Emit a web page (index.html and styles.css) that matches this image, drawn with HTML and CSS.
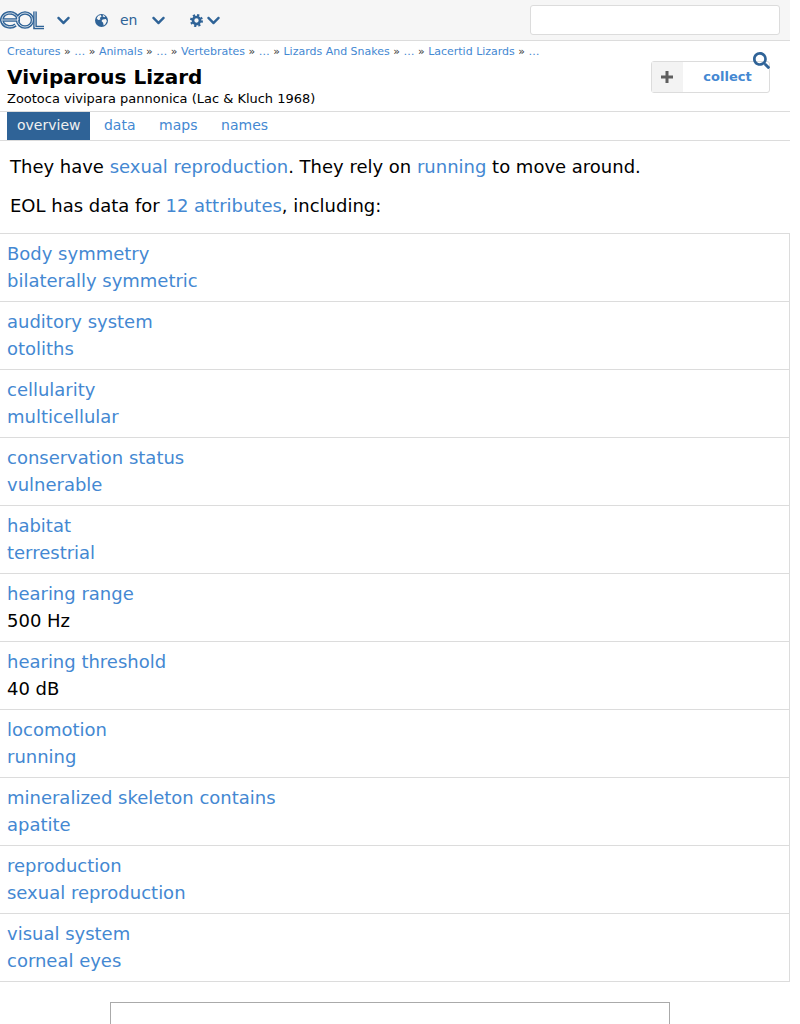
FILE: index.html
```html
<!DOCTYPE html>
<html lang="en">
<head>
  <meta charset="UTF-8" />
  <meta name="viewport" content="width=device-width, initial-scale=1" />
  <title>Viviparous Lizard</title>
  <link rel="stylesheet" href="styles.css">
</head>
<body>
  <div class="page">
    <!-- Top bar -->
    <div class="topbar">
      <svg class="logo" viewBox="0 0 44 20" width="44" height="20" aria-label="EOL">
        <g class="logo-thick">
          <path d="M1.8 10h16.4a8.2 7 0 1 0-2.6 5"/>
          <ellipse cx="25" cy="10" rx="7.5" ry="7"/>
          <path d="M35 1.5v16h9"/>
        </g>
        <g class="logo-thin">
          <path d="M1.8 10h16.4a8.2 7 0 1 0-2.6 5"/>
          <ellipse cx="25" cy="10" rx="7.5" ry="7"/>
          <path d="M35 1.5v16h9"/>
        </g>
      </svg>
      <svg class="icon chevron chevron-logo" viewBox="0 0 448 512"><path d="M207.029 381.476L12.686 187.132c-9.373-9.373-9.373-24.569 0-33.941l22.667-22.667c9.357-9.357 24.522-9.375 33.901-.04L224 284.505l154.745-154.021c9.379-9.335 24.544-9.317 33.901.04l22.667 22.667c9.373 9.373 9.373 24.569 0 33.941L240.971 381.476c-9.373 9.372-24.569 9.372-33.942 0z"/></svg>
      <svg class="icon globe" viewBox="0 0 24 24">
        <circle cx="12" cy="12" r="12"/>
        <path class="land" d="M6 3l5-1 1 3-3 2 1 3-4 1-3-3zM14 10l6-1 2 4-3 6-3 2-1-5-3-3zM15 2l4 2-2 2-3-2z"/>
      </svg>
      <span class="lang">en</span>
      <svg class="icon chevron chevron-lang" viewBox="0 0 448 512"><path d="M207.029 381.476L12.686 187.132c-9.373-9.373-9.373-24.569 0-33.941l22.667-22.667c9.357-9.357 24.522-9.375 33.901-.04L224 284.505l154.745-154.021c9.379-9.335 24.544-9.317 33.901.04l22.667 22.667c9.373 9.373 9.373 24.569 0 33.941L240.971 381.476c-9.373 9.372-24.569 9.372-33.942 0z"/></svg>
      <svg class="icon cog" viewBox="0 0 24 24">
        <circle class="cog-teeth" cx="12" cy="12" r="10"/>
        <circle class="cog-ring" cx="12" cy="12" r="6.5"/>
      </svg>
      <svg class="icon chevron chevron-cog" viewBox="0 0 448 512"><path d="M207.029 381.476L12.686 187.132c-9.373-9.373-9.373-24.569 0-33.941l22.667-22.667c9.357-9.357 24.522-9.375 33.901-.04L224 284.505l154.745-154.021c9.379-9.335 24.544-9.317 33.901.04l22.667 22.667c9.373 9.373 9.373 24.569 0 33.941L240.971 381.476c-9.373 9.372-24.569 9.372-33.942 0z"/></svg>
      <input class="search-input" type="text" />
    </div>

    <!-- Page header -->
    <div class="header">
      <div class="crumbs">
        <a href="#">Creatures</a> » <a href="#">…</a> » <a href="#">Animals</a> » <a href="#">…</a> » <a href="#">Vertebrates</a> » <a href="#">…</a> » <a href="#">Lizards And Snakes</a> » <a href="#">…</a> » <a href="#">Lacertid Lizards</a> » <a href="#">…</a>
      </div>
      <div class="title-row">
        <div>
          <h1 class="title">Viviparous Lizard</h1>
          <div class="subtitle">Zootoca vivipara pannonica (Lac &amp; Kluch 1968)</div>
        </div>
        <button class="collect-btn">
          <span class="collect-plus"><svg viewBox="0 0 12 12" width="12" height="12"><path d="M4.5 0h3v4.5H12v3H7.5V12h-3V7.5H0v-3h4.5z"/></svg></span>
          <span class="collect-label">collect</span>
        </button>
      </div>
      <svg class="search-icon" viewBox="0 0 512 512"><path d="M505 442.7L405.3 343c-4.5-4.5-10.6-7-17-7H372c27.6-35.3 44-79.7 44-128C416 93.1 322.9 0 208 0S0 93.1 0 208s93.1 208 208 208c48.3 0 92.7-16.4 128-44v16.3c0 6.4 2.5 12.5 7 17l99.7 99.7c9.4 9.4 24.6 9.4 33.9 0l28.3-28.3c9.4-9.4 9.4-24.6.1-34zM208 336c-70.7 0-128-57.2-128-128 0-70.7 57.2-128 128-128 70.7 0 128 57.2 128 128 0 70.7-57.2 128-128 128z"/></svg>
    </div>

    <!-- Tabs -->
    <div class="tabs">
      <a class="tab active" href="#">overview</a>
      <a class="tab" href="#">data</a>
      <a class="tab" href="#">maps</a>
      <a class="tab" href="#">names</a>
    </div>

    <!-- Summary -->
    <div class="summary">
      <p>They have <a href="#">sexual reproduction</a>. They rely on <a href="#">running</a> to move around.</p>
      <p>EOL has data for <a href="#">12 attributes</a>, including:</p>
    </div>

    <!-- Attributes -->
    <ul class="attrs">
      <li><a href="#">Body symmetry</a><a href="#">bilaterally symmetric</a></li>
      <li><a href="#">auditory system</a><a href="#">otoliths</a></li>
      <li><a href="#">cellularity</a><a href="#">multicellular</a></li>
      <li><a href="#">conservation status</a><a href="#">vulnerable</a></li>
      <li><a href="#">habitat</a><a href="#">terrestrial</a></li>
      <li><a href="#">hearing range</a><span>500 Hz</span></li>
      <li><a href="#">hearing threshold</a><span>40 dB</span></li>
      <li><a href="#">locomotion</a><a href="#">running</a></li>
      <li><a href="#">mineralized skeleton contains</a><a href="#">apatite</a></li>
      <li><a href="#">reproduction</a><a href="#">sexual reproduction</a></li>
      <li><a href="#">visual system</a><a href="#">corneal eyes</a></li>
    </ul>

    <div class="map-box"></div>
  </div>
</body>
</html>
```

FILE: styles.css
```css
html, body {
  margin: 0;
  padding: 0;
  background: #fff;
}

body {
  font-family: "DejaVu Sans", sans-serif;
  color: #000;
}

a {
  color: #4488d2;
  text-decoration: none;
}

.page {
  width: 790px;
  height: 1024px;
  overflow: hidden;
  position: relative;
}

/* top bar */
.topbar {
  display: flex;
  align-items: center;
  box-sizing: border-box;
  height: 41px;
  background: #f6f6f6;
  border-bottom: 1px solid #dcdcdc;
}

.logo {
  display: block;
  flex: none;
}

.logo g {
  fill: none;
}

.logo-thick {
  stroke: #2f6397;
  stroke-width: 3.6;
}

.logo-thin {
  stroke: #f6f6f6;
  stroke-width: 0.8;
}

.icon {
  display: block;
  flex: none;
  fill: #2f6397;
}

.chevron {
  width: 13px;
  height: 15px;
}

.chevron-logo {
  margin-left: 13px;
}

.globe {
  width: 13px;
  height: 13px;
  margin-left: 25px;
}

.globe .land {
  fill: #f6f6f6;
}

.lang {
  margin-left: 12px;
  font-size: 14px;
  color: #2f6397;
}

.chevron-lang {
  margin-left: 14px;
}

.cog {
  width: 13px;
  height: 13px;
  margin-left: 25px;
  fill: none;
}

.cog-teeth {
  stroke: #2f6397;
  stroke-width: 4;
  stroke-dasharray: 4 3.85;
}

.cog-ring {
  stroke: #2f6397;
  stroke-width: 5;
}

.chevron-cog {
  margin-left: 4px;
}

.search-input {
  box-sizing: border-box;
  width: 250px;
  height: 30px;
  margin-left: auto;
  margin-right: 10px;
  border: 1px solid #dcdcdc;
  border-radius: 3px;
  background: #fff;
}

/* header */
.header {
  position: relative;
  box-sizing: border-box;
  height: 71px;
  padding: 4px 20px 0 7px;
  border-bottom: 1px solid #dcdcdc;
}

.crumbs {
  font-size: 10.99px;
  line-height: 14px;
  color: #333;
}

.title-row {
  display: flex;
  justify-content: space-between;
}

.title {
  margin: 6px 0 0;
  font-size: 20px;
  line-height: 24px;
  font-weight: 700;
}

.subtitle {
  font-size: 12.98px;
  line-height: 19px;
}

.collect-btn {
  display: flex;
  align-items: stretch;
  box-sizing: border-box;
  width: 119px;
  height: 32px;
  margin-top: 2px;
  padding: 0;
  border: 1px solid #dcdcdc;
  border-radius: 3px;
  background: #fff;
  font-family: inherit;
}

.collect-plus {
  display: flex;
  align-items: center;
  justify-content: center;
  width: 31px;
  padding-right: 2px;
  box-sizing: border-box;
  background: #f3f3f3;
}

.collect-plus svg {
  fill: #5f5f5f;
}

.collect-label {
  flex: 1;
  padding-left: 3px;
  font-size: 13px;
  line-height: 29px;
  font-weight: 700;
  color: #4488d2;
}

.search-icon {
  position: absolute;
  left: 753px;
  top: 11px;
  width: 17px;
  height: 17px;
  fill: #2f6397;
}

/* tabs */
.tabs {
  display: flex;
  box-sizing: border-box;
  height: 29px;
  padding-left: 7px;
  border-bottom: 1px solid #dcdcdc;
}

.tab {
  padding: 0 13.6px 0 10px;
  font-size: 14px;
  line-height: 26px;
}

.tab.active {
  padding: 0 10px;
  margin-right: 3.5px;
  background: #2f6397;
  color: #f0f0f0;
}

/* summary */
.summary {
  box-sizing: border-box;
  height: 92px;
  padding: 12px 10px 0;
  font-size: 17.99px;
  line-height: 27px;
}

.summary p {
  margin: 0 0 12px;
}

/* attributes */
.attrs {
  margin: 0;
  padding: 0;
  list-style: none;
  border-top: 1px solid #dcdcdc;
  font-size: 17.99px;
  line-height: 27px;
}

.attrs li {
  box-sizing: border-box;
  height: 68px;
  padding: 6px 7px 0;
  border-right: 1px solid #dcdcdc;
  border-bottom: 1px solid #dcdcdc;
}

.attrs li > * {
  display: block;
}

.map-box {
  box-sizing: border-box;
  width: 560px;
  height: 200px;
  margin: 20px 0 0 110px;
  border: 1px solid #aaa;
}
```
